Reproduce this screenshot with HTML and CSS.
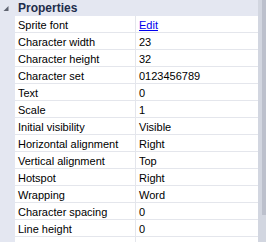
FILE: index.html
```html
<!DOCTYPE html>
<html>
<head>
<meta charset="utf-8">
<link rel="stylesheet" href="styles.css">
</head>
<body>
<div class="panel">
  <div class="main">
    <div class="header">
      <span class="toggle"><svg width="15" height="16" viewBox="0 0 15 16"><polygon points="8.5,6 8.5,11 3.5,11" fill="#5f6470"/></svg></span>
      <span class="title">Properties</span>
    </div>
    <div class="row"><span class="gut"></span><span class="name">Sprite font</span><span class="val"><a class="link">Edit</a></span></div>
    <div class="row"><span class="gut"></span><span class="name">Character width</span><span class="val">23</span></div>
    <div class="row"><span class="gut"></span><span class="name">Character height</span><span class="val">32</span></div>
    <div class="row"><span class="gut"></span><span class="name">Character set</span><span class="val">0123456789</span></div>
    <div class="row"><span class="gut"></span><span class="name">Text</span><span class="val">0</span></div>
    <div class="row"><span class="gut"></span><span class="name">Scale</span><span class="val">1</span></div>
    <div class="row"><span class="gut"></span><span class="name">Initial visibility</span><span class="val">Visible</span></div>
    <div class="row"><span class="gut"></span><span class="name">Horizontal alignment</span><span class="val">Right</span></div>
    <div class="row"><span class="gut"></span><span class="name">Vertical alignment</span><span class="val">Top</span></div>
    <div class="row"><span class="gut"></span><span class="name">Hotspot</span><span class="val">Right</span></div>
    <div class="row"><span class="gut"></span><span class="name">Wrapping</span><span class="val">Word</span></div>
    <div class="row"><span class="gut"></span><span class="name">Character spacing</span><span class="val">0</span></div>
    <div class="row"><span class="gut"></span><span class="name">Line height</span><span class="val">0</span></div>
    <div class="row"><span class="gut"></span><span class="name">Effect</span><span class="val"><a class="link">(none)</a></span></div>
  </div>
  <div class="scroll"><div class="thumb"></div></div>
</div>
</body>
</html>
```

FILE: styles.css
```css
html, body {
  margin: 0;
  padding: 0;
  background: #ffffff;
}
body {
  width: 266px;
  height: 242px;
  overflow: hidden;
  font-family: "Liberation Sans", Arial, sans-serif;
  font-size: 11px;
  color: #000000;
}
.panel {
  display: flex;
  height: 242px;
}
.main {
  flex: 1;
  display: flex;
  flex-direction: column;
  overflow: hidden;
  background: #e4e7f1;
}
.header {
  flex: 0 0 16px;
  height: 16px;
  display: flex;
  align-items: center;
  background: #e4e7f1;
}
.toggle {
  width: 15px;
  height: 16px;
  display: flex;
}
.title {
  padding-left: 3px;
  font-weight: bold;
  font-size: 12px;
  color: #1e2d4b;
}
.row {
  flex: 0 0 17px;
  height: 17px;
  box-sizing: border-box;
  display: flex;
  align-items: stretch;
}
.gut {
  width: 15px;
  flex: 0 0 15px;
  background: #e4e7f1;
}
.name {
  width: 121px;
  flex: 0 0 121px;
  box-sizing: border-box;
  padding: 1px 0 0 3px;
  background: #ffffff;
  border-right: 1px solid #e4e6ec;
  border-bottom: 1px solid #e4e6ec;
  display: flex;
  align-items: center;
  white-space: nowrap;
}
.val {
  flex: 1;
  padding: 1px 0 0 3px;
  background: #ffffff;
  border-bottom: 1px solid #e4e6ec;
  display: flex;
  align-items: center;
  white-space: nowrap;
}
.link {
  color: #0000ee;
  text-decoration: underline;
}
.scroll {
  width: 8px;
  flex: 0 0 8px;
  background: #d2d6e0;
  display: flex;
  justify-content: flex-end;
}
.thumb {
  width: 4px;
  height: 215px;
  background: #bcc0cc;
}
```
